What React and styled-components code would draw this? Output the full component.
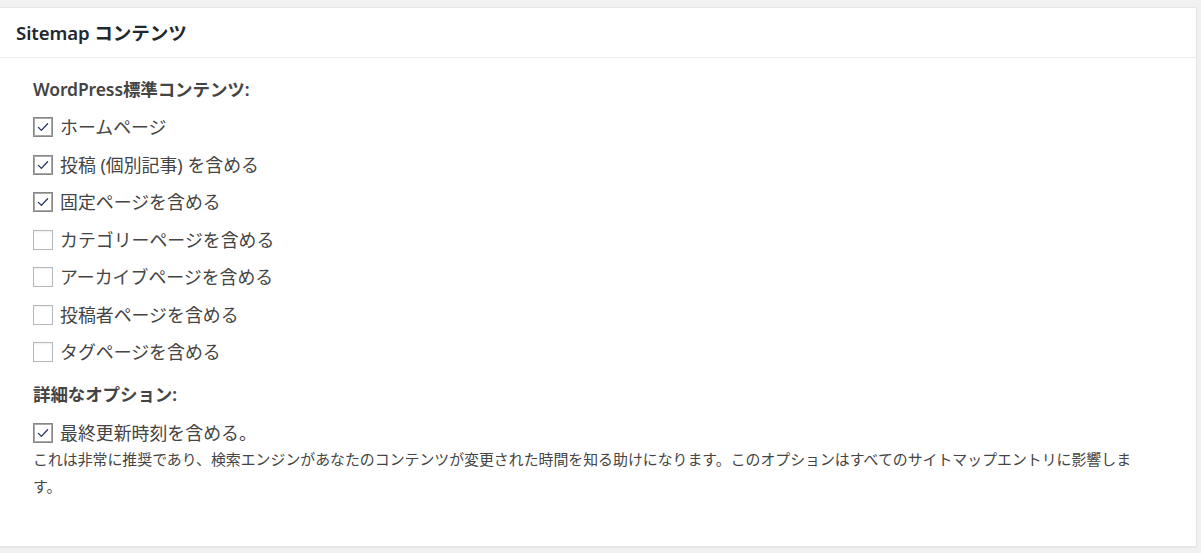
import React from "react";
import styled, { createGlobalStyle } from "styled-components";

const Global = createGlobalStyle`
  html, body { margin: 0; padding: 0; background: #f1f1f1; }
  body {
    font-family: "Noto Sans", "Noto Sans CJK JP", sans-serif;
    color: #444;
    overflow: hidden;
  }
`;

const Page = styled.div`
  padding-top: 7px;
  width: 1201px;
  height: 553px;
  box-sizing: border-box;
`;

const Card = styled.section`
  width: 1198px;
  margin-left: -1px;
  box-sizing: border-box;
  background: #fff;
  border: 1px solid #e5e5e5;
  box-shadow: 0 1px 1px rgba(0, 0, 0, 0.04);
`;

const Header = styled.header`
  height: 50px;
  box-sizing: border-box;
  border-bottom: 1px solid #eee;
  display: flex;
  align-items: center;
  padding: 0 0 2px 16px;
`;

const Title = styled.h2`
  margin: 0;
  font-size: 18.6px;
  font-weight: 600;
  color: #23282d;
  letter-spacing: -0.1px;
`;

const Body = styled.div`
  padding: 18px 0 46px 33px;
  display: flex;
  flex-direction: column;
`;

const Heading = styled.h3`
  margin: ${(p) => p.$top}px 0 0;
  height: 26px;
  line-height: 26px;
  font-size: 17.5px;
  font-weight: 600;
  color: #444;
  letter-spacing: -0.1px;
`;

const List = styled.div`
  display: flex;
  flex-direction: column;
  gap: 11.5px;
  margin-top: ${(p) => p.$top}px;
`;

const Row = styled.label`
  display: flex;
  align-items: center;
  height: 26px;
  gap: 7px;
  font-size: 17.9px;
  line-height: 26px;
  color: #444;
`;

const Box = styled.span`
  width: 20px;
  height: 20px;
  box-sizing: border-box;
  flex: none;
  background: #fff;
  display: flex;
  align-items: center;
  justify-content: center;
  border: 1px solid ${(p) => (p.$checked ? "#888" : "#b4b9be")};
  box-shadow: ${(p) =>
    p.$checked
      ? "inset 0 0 0 1px #a9a9a9"
      : "inset 0 1px 2px rgba(0,0,0,0.07)"};
`;

const Desc = styled.p`
  margin: 0;
  width: 1118px;
  font-size: 14.9px;
  line-height: 27px;
  color: #444;
`;

const Check = () => (
  <svg width="16" height="16" viewBox="0 0 16 16" aria-hidden="true">
    <path
      d="M3.4 8.4 L6.4 11.4 L12.6 4.8"
      fill="none"
      stroke="#23355e"
      strokeWidth="1.3"
      strokeLinecap="round"
      strokeLinejoin="round"
    />
  </svg>
);

const Option = ({ checked, children }) => (
  <Row>
    <Box $checked={checked}>{checked && <Check />}</Box>
    <span>{children}</span>
  </Row>
);

const standard = [
  ["ホームページ", true],
  ["投稿 (個別記事) を含める", true],
  ["固定ページを含める", true],
  ["カテゴリーページを含める", false],
  ["アーカイブページを含める", false],
  ["投稿者ページを含める", false],
  ["タグページを含める", false],
];

export default function App() {
  return (
    <>
      <Global />
      <Page>
        <Card>
          <Header>
            <Title>Sitemap コンテンツ</Title>
          </Header>
          <Body>
            <Heading $top={0}>WordPress標準コンテンツ:</Heading>
            <List $top={12}>
              {standard.map(([label, checked]) => (
                <Option key={label} checked={checked}>
                  {label}
                </Option>
              ))}
            </List>
            <Heading $top={16}>詳細なオプション:</Heading>
            <List $top={13}>
              <Option checked>最終更新時刻を含める。</Option>
            </List>
            <Desc>
              これは非常に推奨であり、検索エンジンがあなたのコンテンツが変更された時間を知る助けになります。このオプションはすべてのサイトマップエントリに影響します。
            </Desc>
          </Body>
        </Card>
      </Page>
    </>
  );
}
